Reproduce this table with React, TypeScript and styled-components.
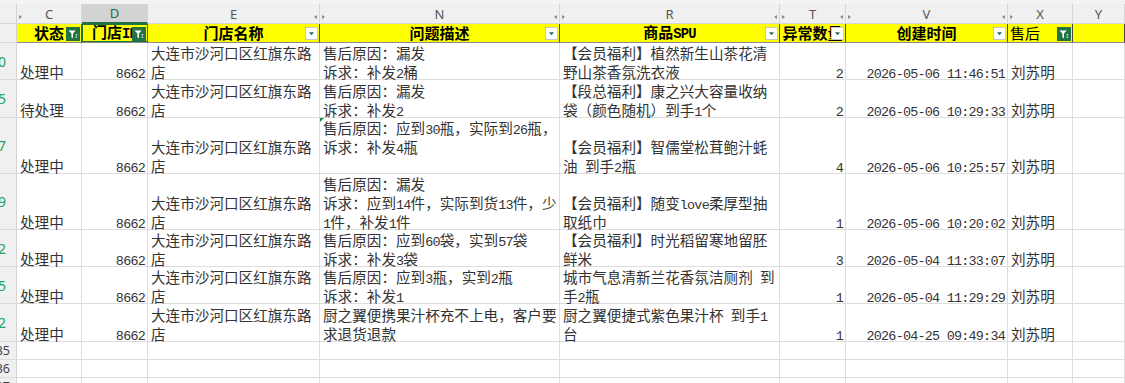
import React from 'react';
import styled, { createGlobalStyle, css } from 'styled-components';

const COLUMNS = '17px 65px 66px 172px 240px 220px 66px 162px 65px 1fr';

const GlobalStyle = createGlobalStyle`
  html, body { margin: 0; padding: 0; background: #ffffff; }
  body { font-family: "Noto Sans CJK SC", "Noto Sans", sans-serif; }
  #root { width: 1125px; height: 383px; overflow: hidden; }
`;

const Sheet = styled.div`
  width: 1125px;
  height: 383px;
  overflow: hidden;
  background: #ffffff;
  display: flex;
  flex-direction: column;
`;

const TopStrip = styled.div`
  height: 4px;
  flex-shrink: 0;
  background: #f3f3f3;
`;

const GridRow = styled.div<{ $h: number }>`
  display: grid;
  grid-template-columns: ${COLUMNS};
  height: ${p => p.$h}px;
  flex-shrink: 0;
`;

const Corner = styled.div`
  box-sizing: border-box;
  background: #f0f0f0;
  border-right: 1px solid #d4d4d4;
  border-bottom: 1px solid #d4d4d4;
`;

const ColLetter = styled.div<{ $active?: boolean }>`
  position: relative;
  box-sizing: border-box;
  background: ${p => (p.$active ? '#d3d3d3' : '#f0f0f0')};
  border-right: 1px solid #d6d6d6;
  border-bottom: ${p => (p.$active ? '2px solid #217346' : '1px solid #d6d6d6')};
  color: ${p => (p.$active ? '#1b6b3f' : '#555555')};
  font-family: "Noto Sans", "Liberation Sans", sans-serif;
  font-size: 13px;
  display: flex;
  align-items: center;
  justify-content: center;
`;

const Marker = styled.span<{ $side: 'left' | 'right' }>`
  position: absolute;
  top: 11px;
  width: 0;
  height: 0;
  border-top: 2.5px solid transparent;
  border-bottom: 2.5px solid transparent;
  ${p =>
    p.$side === 'left'
      ? css`left: 2px; border-left: 3px solid #8a8a8a;`
      : css`right: 2px; border-right: 3px solid #8a8a8a;`}
`;

const RowNum = styled.div<{ $filtered?: boolean }>`
  box-sizing: border-box;
  background: #f0f0f0;
  border-right: 1px solid #d4d4d4;
  border-bottom: 1px solid #dadada;
  display: flex;
  align-items: center;
  justify-content: flex-end;
  overflow: hidden;
  white-space: nowrap;
  padding-right: ${p => (p.$filtered ? 10 : 6)}px;
  font-family: "Noto Sans", "Liberation Sans", sans-serif;
  font-size: ${p => (p.$filtered ? 14 : 12.5)}px;
  color: ${p => (p.$filtered ? '#22a463' : '#444444')};
`;

const HeadCell = styled.div<{ $left?: boolean; $plain?: boolean; $selected?: boolean }>`
  position: relative;
  box-sizing: border-box;
  background: #ffff00;
  border-right: 1px solid ${p => (p.$selected ? '#217346' : '#4a4a4a')};
  border-bottom: 1px solid #8a8a8a;
  ${p => p.$selected && css`box-shadow: inset 1px 1px 0 #217346, inset 0 -1px 0 #217346;`}
  display: flex;
  align-items: center;
  justify-content: ${p => (p.$left ? 'flex-start' : 'center')};
  padding-left: ${p => (p.$left ? 2 : 0)}px;
  overflow: hidden;
  white-space: nowrap;
  font-size: 15px;
  line-height: 18px;
  font-weight: ${p => (p.$plain ? 400 : 700)};
  color: #000000;
`;

const HeadText = styled.span`
  display: block;
  white-space: pre;
`;

const IconSlot = styled.span`
  position: absolute;
  right: 1px;
  top: 3px;
  display: flex;
`;

const Cell = styled.div<{ $right?: boolean; $flag?: boolean }>`
  position: relative;
  box-sizing: border-box;
  border-right: 1px solid #dedede;
  border-bottom: 1px solid #dedede;
  display: flex;
  flex-direction: column;
  justify-content: flex-end;
  align-items: ${p => (p.$right ? 'flex-end' : 'flex-start')};
  padding: 0 ${p => (p.$right ? 2 : 0)}px 0 ${p => (p.$right ? 0 : 3)}px;
  overflow: clip;
  overflow-clip-margin: 2px;
  white-space: nowrap;
  font-size: 14.6px;
  line-height: 19px;
  color: #333333;
  ${p =>
    p.$flag &&
    css`
      &::before {
        content: '';
        position: absolute;
        left: 0;
        top: 0;
        border-top: 4px solid #1e8a4a;
        border-right: 4px solid transparent;
      }
    `}
`;

const Lines = styled.div`
  margin-bottom: -2px;
  display: flex;
  flex-direction: column;
`;

const Line = styled.div`
  height: 19px;
  white-space: pre;
`;

const Half = styled.span`
  font-family: "Liberation Mono", "DejaVu Sans Mono", monospace;
  font-size: 0.92em;
  letter-spacing: -0.057em;
  white-space: pre;
`;

const Mixed = ({ text }: { text: string }) => {
  const parts = text.split(/([\x20-\x7e]+)/).filter(s => s.length > 0);
  return (
    <>
      {parts.map((p, i) =>
        /^[\x20-\x7e]+$/.test(p) ? <Half key={i}>{p}</Half> : <React.Fragment key={i}>{p}</React.Fragment>
      )}
    </>
  );
};

const FilterIcon = () => (
  <svg width="14" height="14" viewBox="0 0 14 14">
    <rect width="14" height="14" fill="#217346" />
    <path d="M2.5 3.5h7.2L7 6.6v4.6L5.4 10.3V6.6z" fill="#ffffff" />
    <rect x="9.6" y="7.2" width="1.6" height="1.1" fill="#ffffff" />
    <rect x="9.6" y="9.6" width="1.6" height="1.1" fill="#ffffff" />
  </svg>
);

const DropIcon = () => (
  <svg width="13" height="13" viewBox="0 0 13 13">
    <rect x="0.5" y="0.5" width="12" height="12" fill="#ffffff" stroke="#c8c8c8" />
    <path d="M4 5.3h5L6.5 8.2z" fill="#217346" />
  </svg>
);

type Row = {
  num: string;
  h: number;
  status: string;
  store: string[];
  issue: string[];
  spu: string[];
  count: string;
  time: string;
  flag?: boolean;
};

const STORE = ['大连市沙河口区红旗东路', '店'];

const ROWS: Row[] = [
  { num: '10', h: 37, status: '处理中', store: STORE, issue: ['售后原因：漏发', '诉求：补发2桶'], spu: ['【会员福利】植然新生山茶花清', '野山茶香氛洗衣液'], count: '2', time: '2026-05-06 11:46:51' },
  { num: '15', h: 38, status: '待处理', store: STORE, issue: ['售后原因：漏发', '诉求：补发2'], spu: ['【段总福利】康之兴大容量收纳', '袋（颜色随机）到手1个'], count: '2', time: '2026-05-06 10:29:33' },
  { num: '17', h: 56, status: '处理中', store: STORE, issue: ['售后原因：应到30瓶，实际到26瓶，', '诉求：补发4瓶', ''], spu: ['【会员福利】智儒堂松茸鲍汁蚝', '油 到手2瓶'], count: '4', time: '2026-05-06 10:25:57', flag: true },
  { num: '19', h: 56, status: '处理中', store: STORE, issue: ['售后原因：漏发', '诉求：应到14件，实际到货13件，少', '1件，补发1件'], spu: ['【会员福利】随变love柔厚型抽', '取纸巾'], count: '1', time: '2026-05-06 10:20:02' },
  { num: '22', h: 37, status: '处理中', store: STORE, issue: ['售后原因：应到60袋，实到57袋', '诉求：补发3袋'], spu: ['【会员福利】时光稻留寒地留胚', '鲜米'], count: '3', time: '2026-05-04 11:33:07' },
  { num: '25', h: 37, status: '处理中', store: STORE, issue: ['售后原因：应到3瓶，实到2瓶', '诉求：补发1'], spu: ['城市气息清新兰花香氛洁厕剂 到', '手2瓶'], count: '1', time: '2026-05-04 11:29:29' },
  { num: '32', h: 38, status: '处理中', store: STORE, issue: ['厨之翼便携果汁杯充不上电，客户要', '求退货退款'], spu: ['厨之翼便捷式紫色果汁杯 到手1', '台'], count: '1', time: '2026-04-25 09:49:34' },
];

const EMPTY_ROWS = ['35', '36', '37', '38'];

const LETTERS: { l: string; active?: boolean; left?: boolean; right?: boolean }[] = [
  { l: 'C', left: true },
  { l: 'D', active: true },
  { l: 'E', right: true },
  { l: 'N', left: true, right: true },
  { l: 'R', left: true, right: true },
  { l: 'T', left: true, right: true },
  { l: 'V', left: true, right: true },
  { l: 'X', left: true },
  { l: 'Y' },
];

const TextLines = ({ lines }: { lines: string[] }) => (
  <Lines>
    {lines.map((t, i) => (
      <Line key={i}>
        <Mixed text={t} />
      </Line>
    ))}
  </Lines>
);

const Head = ({ text, icon, left, plain, selected }: { text?: string; icon?: 'filter' | 'drop'; left?: boolean; plain?: boolean; selected?: boolean }) => (
  <HeadCell $left={left} $plain={plain} $selected={selected}>
    {text && (
      <HeadText>
        <Mixed text={text} />
      </HeadText>
    )}
    {icon && <IconSlot>{icon === 'filter' ? <FilterIcon /> : <DropIcon />}</IconSlot>}
  </HeadCell>
);

export default function App() {
  return (
    <>
      <GlobalStyle />
      <Sheet>
        <TopStrip />
        <GridRow $h={20}>
          <Corner />
          {LETTERS.map(c => (
            <ColLetter key={c.l} $active={c.active}>
              {c.left && <Marker $side="left" />}
              {c.l}
              {c.right && <Marker $side="right" />}
            </ColLetter>
          ))}
        </GridRow>
        <GridRow $h={19}>
          <RowNum />
          <Head text="状态" icon="filter" />
          <Head text="门店ID" icon="filter" selected />
          <Head text="门店名称" icon="drop" />
          <Head text="问题描述" icon="drop" />
          <Head text="商品SPU" icon="drop" />
          <Head text="异常数量" icon="drop" />
          <Head text="创建时间" icon="drop" />
          <Head text="售后" icon="filter" left plain />
          <Head />
        </GridRow>
        {ROWS.map(r => (
          <GridRow key={r.num} $h={r.h}>
            <RowNum $filtered>{r.num}</RowNum>
            <Cell><TextLines lines={[r.status]} /></Cell>
            <Cell $right><TextLines lines={['8662']} /></Cell>
            <Cell><TextLines lines={r.store} /></Cell>
            <Cell $flag={r.flag}><TextLines lines={r.issue} /></Cell>
            <Cell><TextLines lines={r.spu} /></Cell>
            <Cell $right><TextLines lines={[r.count]} /></Cell>
            <Cell $right><TextLines lines={[r.time]} /></Cell>
            <Cell><TextLines lines={['刘苏明']} /></Cell>
            <Cell />
          </GridRow>
        ))}
        {EMPTY_ROWS.map(n => (
          <GridRow key={n} $h={18}>
            <RowNum>{n}</RowNum>
            {LETTERS.map(c => (
              <Cell key={c.l} />
            ))}
          </GridRow>
        ))}
      </Sheet>
    </>
  );
}
